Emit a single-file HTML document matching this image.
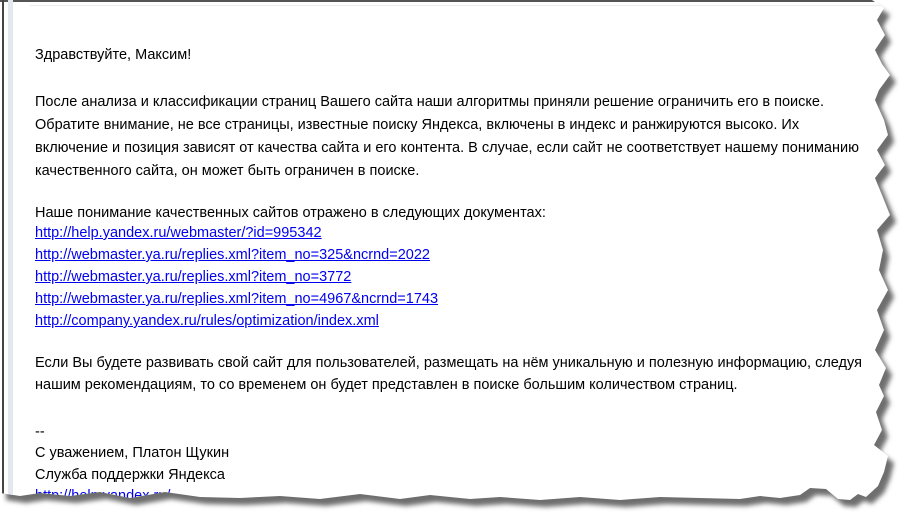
<!DOCTYPE html>
<html><head><meta charset="utf-8"><style>
html,body{margin:0;padding:0;background:#fff;width:905px;height:517px;overflow:hidden}
#page{position:absolute;left:0;top:0;width:905px;height:517px;background:#fff;
clip-path:path('M0,0 L872,0 L884,8 L877,20 L885,35 L875,50 L882,64 L890,75 L879,90 L875,100 L884,120 L888,135 L877,150 L885,165 L875,178 L882,195 L890,215 L877,230 L883,250 L879,270 L888,290 L877,310 L884,330 L875,350 L886,368 L879,385 L884,396 L876,412 L882,430 L874,445 L888,456 L884,472 L878,486 L866,497 L858,494 L850,500 L838,499 L826,489 L810,488 L800,495 L780,498 L760,496 L740,499 L700,498 L660,497 L620,500 L580,497 L540,500 L500,497 L470,499 L430,495 L400,499 L360,494 L320,499 L280,496 L240,498 L200,497 L165,492 L130,498 L100,492 L70,496 L40,493 L20,496 L0,493 Z')}
#shadow{position:absolute;left:0;top:0}
.t{position:absolute;left:35px;font:14.5px "Liberation Sans",Arial,sans-serif;color:#000;white-space:nowrap;line-height:22px}
a{color:#0000ee;text-decoration:underline}
</style></head><body>
<svg id="shadow" width="905" height="517"><defs><filter id="b"><feGaussianBlur stdDeviation="2.5"/></filter></defs>
<path transform="translate(6,7)" filter="url(#b)" fill="#6e6e6e" d="M0,0 L872,0 L884,8 L877,20 L885,35 L875,50 L882,64 L890,75 L879,90 L875,100 L884,120 L888,135 L877,150 L885,165 L875,178 L882,195 L890,215 L877,230 L883,250 L879,270 L888,290 L877,310 L884,330 L875,350 L886,368 L879,385 L884,396 L876,412 L882,430 L874,445 L888,456 L884,472 L878,486 L866,497 L858,494 L850,500 L838,499 L826,489 L810,488 L800,495 L780,498 L760,496 L740,499 L700,498 L660,497 L620,500 L580,497 L540,500 L500,497 L470,499 L430,495 L400,499 L360,494 L320,499 L280,496 L240,498 L200,497 L165,492 L130,498 L100,492 L70,496 L40,493 L20,496 L0,493 Z"/></svg>
<div id="page">
<div style="position:absolute;left:0;top:0;width:905px;height:2px;background:#555"></div>
<div style="position:absolute;left:2px;top:0;width:2px;height:517px;background:#444"></div>
<div style="position:absolute;left:8px;top:0;width:5px;height:517px;background:#e3e7f0"></div>
<div style="position:absolute;left:30px;top:5px;width:875px;height:1px;background:#ececec"></div>
<div class="t" style="top:44px">Здравствуйте, Максим!</div>
<div class="t" style="top:91px">После анализа и классификации страниц Вашего сайта наши алгоритмы приняли решение ограничить его в поиске.</div>
<div class="t" style="top:114px">Обратите внимание, не все страницы, известные поиску Яндекса, включены в индекс и ранжируются высоко. Их</div>
<div class="t" style="top:137px">включение и позиция зависят от качества сайта и его контента. В случае, если сайт не соответствует нашему пониманию</div>
<div class="t" style="top:160px">качественного сайта, он может быть ограничен в поиске.</div>
<div class="t" style="top:202px">Наше понимание качественных сайтов отражено в следующих документах:</div>
<div class="t" style="top:222px"><a>http://help.yandex.ru/webmaster/?id=995342</a></div>
<div class="t" style="top:244px"><a>http://webmaster.ya.ru/replies.xml?item_no=325&amp;ncrnd=2022</a></div>
<div class="t" style="top:266px"><a>http://webmaster.ya.ru/replies.xml?item_no=3772</a></div>
<div class="t" style="top:288px"><a>http://webmaster.ya.ru/replies.xml?item_no=4967&amp;ncrnd=1743</a></div>
<div class="t" style="top:310px"><a>http://company.yandex.ru/rules/optimization/index.xml</a></div>
<div class="t" style="top:352px">Если Вы будете развивать свой сайт для пользователей, размещать на нём уникальную и полезную информацию, следуя</div>
<div class="t" style="top:374px">нашим рекомендациям, то со временем он будет представлен в поиске большим количеством страниц.</div>
<div class="t" style="top:421px">--</div>
<div class="t" style="top:442px">С уважением, Платон Щукин</div>
<div class="t" style="top:464px">Служба поддержки Яндекса</div>
<div class="t" style="top:485px"><a>http://help.yandex.ru/</a></div>
</div>
</body></html>
